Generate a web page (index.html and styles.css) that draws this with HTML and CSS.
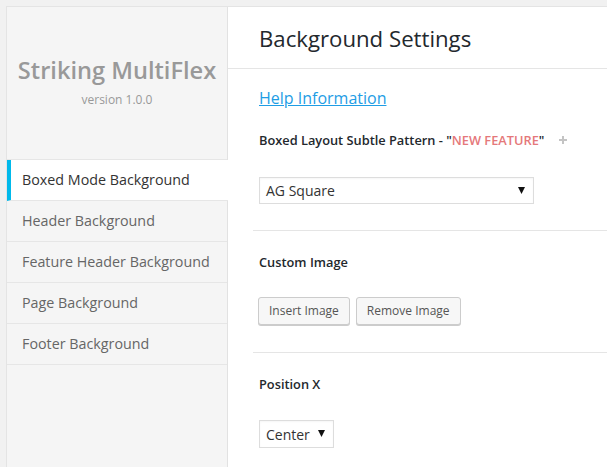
FILE: index.html
```html
<!DOCTYPE html>
<html>
<head>
<meta charset="utf-8">
<link rel="stylesheet" href="styles.css">
</head>
<body>
<div class="wrap">
  <aside class="sidebar">
    <div class="brand">
      <div class="brand-title">Striking MultiFlex</div>
      <div class="brand-version">version 1.0.0</div>
    </div>
    <ul class="nav">
      <li class="nav-item active">Boxed Mode Background</li>
      <li class="nav-item">Header Background</li>
      <li class="nav-item">Feature Header Background</li>
      <li class="nav-item">Page Background</li>
      <li class="nav-item">Footer Background</li>
    </ul>
  </aside>
  <main class="main">
    <header class="main-header">
      <h1 class="main-title">Background Settings</h1>
    </header>
    <div class="content">
      <div class="help"><a class="help-link" href="#">Help Information</a></div>
      <section class="field first">
        <div class="field-label">Boxed Layout Subtle Pattern - "<span class="new">NEW FEATURE</span>"
          <svg class="plus" width="8" height="8" viewBox="0 0 8 8"><path d="M4 0v8M0 4h8" stroke="#c4c4c4" stroke-width="2"/></svg>
        </div>
        <div class="select select-wide"><span>AG Square</span><svg class="arrow" width="7" height="7" viewBox="0 0 7 7"><path d="M0 0h7L3.5 7z" fill="#111"/></svg></div>
      </section>
      <section class="field">
        <div class="field-label">Custom Image</div>
        <div class="buttons">
          <button class="btn">Insert Image</button>
          <button class="btn">Remove Image</button>
        </div>
      </section>
      <section class="field last">
        <div class="field-label">Position X</div>
        <div class="select select-small"><span>Center</span><svg class="arrow" width="7" height="7" viewBox="0 0 7 7"><path d="M0 0h7L3.5 7z" fill="#111"/></svg></div>
      </section>
    </div>
  </main>
</div>
</body>
</html>
```

FILE: styles.css
```css
html, body {
  margin: 0;
  padding: 0;
  height: 100%;
}
body {
  background: #f1f1f1;
  font-family: "Open Sans", "Noto Sans", sans-serif;
  padding: 6px 0 0 6px;
  box-sizing: border-box;
  overflow: hidden;
}
.wrap {
  display: flex;
  border-left: 1px solid #e4e4e4;
  border-top: 1px solid #e4e4e4;
  height: 100%;
  box-sizing: border-box;
}
.sidebar {
  width: 220px;
  background: #f5f5f5;
  border-right: 1px solid #e2e2e2;
  flex: none;
}
.brand {
  height: 152px;
  display: flex;
  flex-direction: column;
  align-items: center;
  box-sizing: border-box;
  padding-top: 48px;
}
.brand-title {
  font-size: 23.6px;
  font-weight: 600;
  color: #999;
  line-height: 30px;
}
.brand-version {
  font-size: 12px;
  color: #999;
  line-height: 16px;
  margin-top: 7px;
}
.nav {
  list-style: none;
  margin: 0;
  padding: 0;
  border-top: 1px solid #e6e6e6;
}
.nav-item {
  height: 40px;
  line-height: 40px;
  border-bottom: 1px solid #e6e6e6;
  padding-left: 15px;
  font-size: 14.3px;
  color: #666;
}
.nav-item.active {
  background: #fff;
  color: #333;
  border-left: 4px solid #00b9eb;
  padding-left: 11px;
  margin-right: -1px;
}
.main {
  flex: 1;
  background: #fff;
}
.main-header {
  height: 62px;
  border-bottom: 1px solid #e5e5e5;
  padding-left: 31px;
  box-sizing: border-box;
}
.main-title {
  margin: 0;
  font-size: 22.2px;
  font-weight: 400;
  color: #23282d;
  line-height: 30px;
  padding-top: 17px;
}
.content {
  padding-left: 25px;
}
.help {
  padding: 19px 0 0 6px;
  line-height: 20px;
}
.help-link {
  font-size: 16px;
  color: #1e9de5;
  text-decoration: underline;
}
.field {
  padding: 23px 0 26px 6px;
  border-bottom: 1px solid #e5e5e5;
}
.field.first {
  padding-top: 24px;
}
.field.last {
  border-bottom: none;
}
.field.last .field-label {
  margin-bottom: 28px;
}
.field-label {
  font-size: 12.8px;
  font-weight: 600;
  color: #23282d;
  line-height: 16px;
  margin-bottom: 29px;
  display: flex;
  align-items: center;
}
.new {
  color: #e5787a;
}
.plus {
  margin-left: 15px;
}
.select {
  border: 1px solid #ddd;
  height: 27px;
  box-sizing: border-box;
  display: flex;
  align-items: center;
  justify-content: space-between;
  padding: 0 8px 0 6px;
  font-size: 14px;
  color: #333;
  box-shadow: inset 0 1px 2px rgba(0,0,0,0.04);
}
.select-wide {
  width: 275px;
}
.select-small {
  width: 75px;
  height: 28px;
}
.arrow {
  margin-top: -1px;
}
.buttons {
  display: flex;
  gap: 6px;
  margin: -2px 0 1px -1px;
}
.btn {
  font-family: "Open Sans", "Noto Sans", sans-serif;
  font-size: 12px;
  color: #555;
  background: #f7f7f7;
  border: 1px solid #ccc;
  border-radius: 3px;
  box-shadow: 0 1px 0 #ccc;
  height: 28px;
  padding: 0 10px;
  line-height: 26px;
}
```
